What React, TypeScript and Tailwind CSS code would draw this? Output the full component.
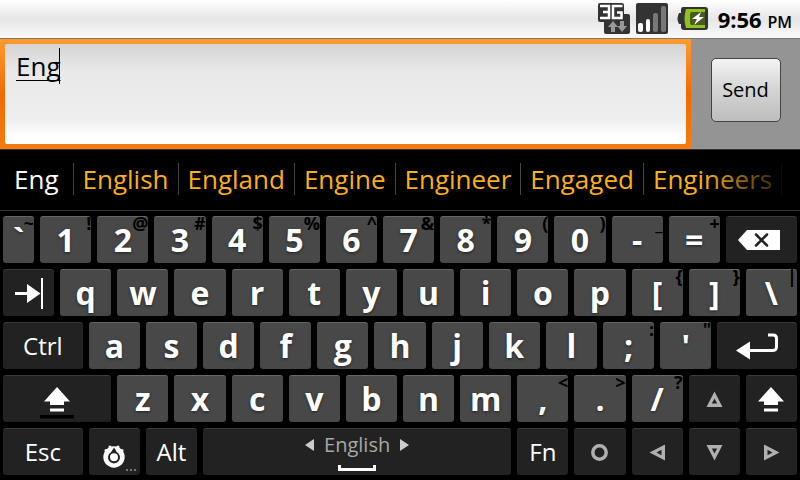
import type { ReactNode } from "react"
import { useState } from "react"

type KeyDef = {
  label: string
  // shifted symbol in the top right corner
  alt?: string
  text?: string
  icon?: ReactNode
  size?: string
  dark?: boolean
}

const TabIcon = () => (
  <svg width="28" height="31" viewBox="0 0 28 31" fill="#fff">
    <path d="M0 14h12V6l13.500 9.500L12 25v-8H0zM26 0h2v31h-2z" />
  </svg>
)

const BackspaceIcon = () => (
  <svg width="46" height="20" viewBox="0 0 46 20">
    <path d="M0 10L9 0h33v20H9z" fill="#fff" />
    <path d="M18 4.500l11 11M29 4.500l-11 11" stroke="#222" strokeWidth="2.500" strokeLinecap="round" />
  </svg>
)

const EnterIcon = () => (
  <svg width="43" height="27" viewBox="0 0 43 27">
    <path d="M0 17.500L14 8.500v18z" fill="#fff" />
    <path d="M13 17.500H36Q40.500 17.500 40.500 14V5.500Q40.500 2 37 2H32" fill="none" stroke="#fff" strokeWidth="3" />
  </svg>
)

const ShiftIcon = ({ led }: { led?: boolean }) => (
  <svg width="34" height="32" viewBox="0 0 34 32" fill="#fff" className="mt-2">
    <path d="M17 0l13 14.500h-6v3.500H10v-3.500H4zM10 21.500h14v3H10z" />
    {led && <path d="M0 28h34v3.500H0z" fill="#000" />}
  </svg>
)

const SettingsIcon = () => (
  <svg width="24" height="24" viewBox="0 0 24 24" fill="#fff" className="mt-2">
    <circle cx="12" cy="13" r="10.700" />
    <circle cx="4" cy="6.500" r="1.500" />
    <circle cx="8" cy="3" r="1.500" />
    <circle cx="16" cy="3" r="1.500" />
    <circle cx="20" cy="6.500" r="1.500" />
    <path d="M12 3.500l3 4.700a6 6 0 1 1-6 0z" fill="#222" />
    <circle cx="12" cy="13.200" r="4" />
  </svg>
)

const arrows = {
  up: "M8.500 0.500L16.500 16H0.500zM8.500 7.500L5.800 12.500H11.200z",
  down: "M8.500 16.500L0.500 1H16.500zM8.500 9.500L5.800 4.500H11.200z",
  left: "M0.500 8.500L16 0.500V16.500zM7.500 8.500L12.500 5.800V11.200z",
  right: "M16.500 8.500L1 0.500V16.500zM9.500 8.500L4.500 5.800V11.200z",
}

const ArrowIcon = ({ dir }: { dir: keyof typeof arrows }) => (
  <svg width="17" height="17" viewBox="0 0 17 17">
    <path d={arrows[dir]} fill="#b0b0b0" fillRule="evenodd" />
  </svg>
)

const CircleIcon = () => (
  <svg width="17" height="17" viewBox="0 0 17 17">
    <circle cx="8.500" cy="8.500" r="6.700" fill="none" stroke="#b0b0b0" strokeWidth="3.500" />
  </svg>
)

const SpaceContent = () => (
  <span className="flex flex-col items-center">
    <span className="flex items-center gap-2.5 text-xl leading-6 text-[#a8a8a8]">
      <svg width="9" height="12" viewBox="0 0 9 12" fill="#ccc">
        <path d="M9 0v12L0 6z" />
      </svg>
      English
      <svg width="9" height="12" viewBox="0 0 9 12" fill="#ccc">
        <path d="M0 0v12l9-6z" />
      </svg>
    </span>
    <span className="mt-2 h-1.5 w-[38px] border-x-3 border-b-3 border-white" />
  </span>
)

const chars = (list: string[]): KeyDef[] =>
  list.map((c) => ({ label: c[0], text: c[0], alt: c[1] }))

const rows: KeyDef[][] = [
  [
    { label: "`", text: "`", alt: "~", size: "grow-[0.65]" },
    ...chars(["1!", "2@", "3#", "4$", "5%", "6^", "7&", "8*", "9(", "0)", "-_", "=+"]),
    { label: "Backspace", icon: <BackspaceIcon />, size: "grow-[1.35]", dark: true },
  ],
  [
    { label: "Tab", icon: <TabIcon />, dark: true },
    ...chars(["q", "w", "e", "r", "t", "y", "u", "i", "o", "p", "[{", "]}", "\\|"]),
  ],
  [
    { label: "Ctrl", text: "Ctrl", size: "grow-[1.5]", dark: true },
    ...chars(["a", "s", "d", "f", "g", "h", "j", "k", "l", ";:", "'\""]),
    { label: "Enter", icon: <EnterIcon />, size: "grow-[1.5]", dark: true },
  ],
  [
    { label: "Left shift", icon: <ShiftIcon led />, size: "grow-[2]", dark: true },
    ...chars(["z", "x", "c", "v", "b", "n", "m", ",<", ".>", "/?"]),
    { label: "Up", icon: <ArrowIcon dir="up" />, dark: true },
    { label: "Right shift", icon: <ShiftIcon />, dark: true },
  ],
  [
    { label: "Esc", text: "Esc", size: "grow-[1.5]", dark: true },
    { label: "Settings", icon: <SettingsIcon />, dark: true, alt: "..." },
    { label: "Alt", text: "Alt", dark: true },
    { label: "Space", icon: <SpaceContent />, size: "grow-[5.5]", dark: true },
    { label: "Fn", text: "Fn", dark: true },
    { label: "Select", icon: <CircleIcon />, dark: true },
    { label: "Left", icon: <ArrowIcon dir="left" />, dark: true },
    { label: "Down", icon: <ArrowIcon dir="down" />, dark: true },
    { label: "Right", icon: <ArrowIcon dir="right" />, dark: true },
  ],
]

const Key = ({ def }: { def: KeyDef }) => (
  <div className={`flex min-w-0 basis-0 ${def.size ?? "grow"}`}>
    <button
      type="button"
      aria-label={def.label}
      className={`relative mx-[3px] flex h-[47px] min-w-0 flex-1 items-center justify-center rounded-[3px] border-t text-white ${
        def.dark
          ? "border-[#3a3a3a] bg-[#222222] text-2xl"
          : "border-[#666666] bg-[#484848] text-[32px] font-bold [text-shadow:0_1px_3px_#222]"
      }`}
    >
      {def.icon ?? <span className="leading-[44px]">{def.text}</span>}
      {def.alt && !def.dark && (
        <span className="absolute -top-1 right-0 text-lg leading-5 font-bold text-black [text-shadow:none]">
          {def.alt}
        </span>
      )}
      {def.alt && def.dark && (
        <span className="absolute right-1 bottom-1 flex gap-0.5">
          <i className="size-0.5 bg-[#777]" />
          <i className="size-0.5 bg-[#777]" />
          <i className="size-0.5 bg-[#777]" />
        </span>
      )}
    </button>
  </div>
)

const StatusBar = () => (
  <div className="flex h-[39px] items-center justify-end border-b border-[#777] bg-linear-to-b from-white via-[#e6e6e6] to-[#fafafa] pr-2">
    <svg width="32" height="32" viewBox="0 0 32 32" className="mr-1.5">
      <path d="M2 0h22q2 0 2 2v9h4q2 0 2 2v16q0 2-2 2H8q-2 0-2-2V19H2q-2 0-2-2V2q0-2 2-2z" fill="#333" />
      <path
        d="M2 3h9v12H2M5 9h6M24.500 3H15v12h8.500V9.500H19"
        fill="none"
        stroke="#fff"
        strokeWidth="2.500"
      />
      <path d="M10 24l5-6 5 6h-3v5h-4v-5zM19.500 23l4.500 6 5-6h-3v-5h-4v5z" fill="#999" />
    </svg>
    <svg width="32" height="32" viewBox="0 0 32 32" className="mr-2">
      <rect width="32" height="31" rx="2" fill="#333" />
      <rect x="2" y="20" width="5" height="9" rx="2" fill="#fff" />
      <rect x="10" y="16" width="4" height="13" rx="2" fill="#fff" />
      <rect x="17" y="10" width="5" height="19" rx="2" fill="#777" />
      <rect x="25" y="3" width="5" height="26" rx="2" fill="#777" />
    </svg>
    <svg width="32" height="24" viewBox="0 0 32 24" className="mr-2.5">
      <path d="M7 0h22q3 0 3 3v17q0 3-3 3H8q-3 0-3-3v-3H3q-3-5 0-11h2V3q0-3 2-3z" fill="#333" />
      <path d="M10 2h19v3H15q-2 6 0 13h14v3H10q-3-9 0-19z" fill="#8fc31a" />
      <path d="M15 5h14v13H15q-2-6 0-13z" fill="#4a5a22" />
      <path d="M25 5l-9 7h5l-3 6 10-8h-5z" fill="#fff" />
    </svg>
    <p className="text-[22px] leading-8 font-bold text-black">
      9:56 <span className="text-base font-semibold">PM</span>
    </p>
  </div>
)

const suggestions = ["English", "England", "Engine", "Engineer", "Engaged", "Engineers", "Engines"]

export default function App() {
  const [message, setMessage] = useState("Eng")

  return (
    <div className="min-h-screen overflow-hidden bg-black font-['Open_Sans','Noto_Sans',sans-serif]">
      <StatusBar />

      <form className="flex h-[111px] border-b border-[#333] bg-[#949494]" onSubmit={(e) => e.preventDefault()}>
        <div className="relative flex flex-1 bg-linear-to-b from-[#ff9a2e] via-[#f06a00] to-[#f57c10] p-[5px]">
          <textarea
            aria-label="Message"
            value={message}
            onChange={(e) => setMessage(e.target.value)}
            className="w-full resize-none rounded-xs bg-[linear-gradient(#d4d4d4,#e9e9e9_28%,#eeeeee_75%,#ffffff_92%)] px-[11px] py-1 text-[26px] leading-9 text-black underline decoration-1 underline-offset-4 outline-none [text-decoration-skip-ink:none]"
          />
          <span className="absolute top-[9px] left-[59px] h-9 w-px bg-black" />
        </div>
        <div className="flex w-[109px] items-center justify-center">
          <button
            type="submit"
            className="mb-2 h-16 w-[70px] rounded-[5px] border border-[#444] bg-linear-to-b from-[#f4f4f4] via-[#d4d4d4] to-[#bdbdbd] text-xl text-black"
          >
            Send
          </button>
        </div>
      </form>

      <div className="relative flex h-[61px] items-center overflow-hidden border-b border-[#333] pb-0.5 text-[26px] leading-8">
        <button type="button" className="shrink-0 px-[14px] text-white">
          Eng
        </button>
        {suggestions.map((word) => (
          <button key={word} type="button" className="shrink-0 border-l border-[#444] px-[9px] text-[#fbb018]">
            {word}
          </button>
        ))}
        <div className="absolute inset-y-0 right-0 w-24 bg-linear-to-l from-black from-5% to-transparent" />
      </div>

      <div className="flex flex-col gap-1.5 pt-[5px] pb-1">
        {rows.map((row, i) => (
          <div key={i} className="flex">
            {row.map((def) => (
              <Key key={def.label} def={def} />
            ))}
          </div>
        ))}
      </div>
    </div>
  )
}
